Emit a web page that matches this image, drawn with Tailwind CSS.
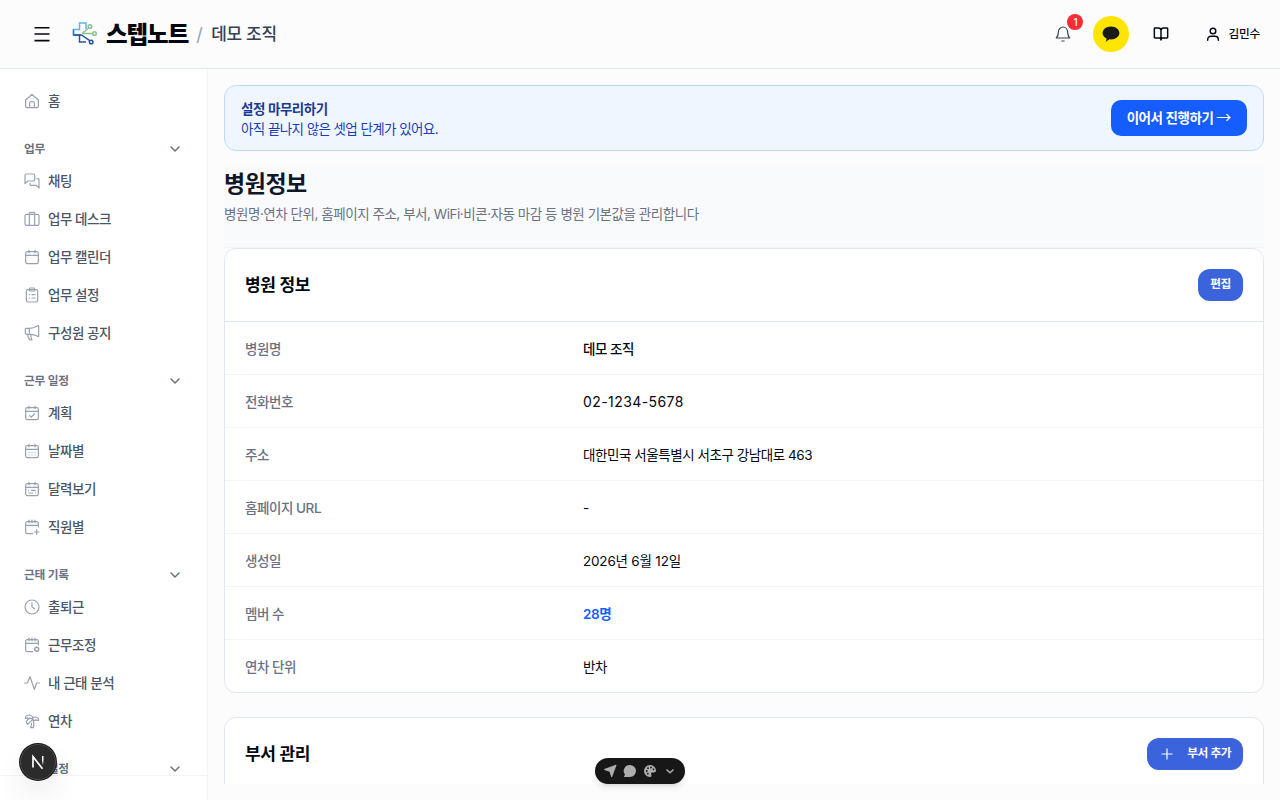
<!DOCTYPE html>
<html lang="ko">

<head>
    <meta charset="UTF-8">
    <meta name="viewport" content="width=device-width, initial-scale=1.0">
    <script src="https://cdn.jsdelivr.net/npm/@tailwindcss/browser@4"></script>
    <title>스텝노트 - 병원정보</title>
</head>

<body class="h-screen flex flex-col overflow-hidden bg-[#fcfcfc] font-['Inter','Noto_Sans_CJK_KR',sans-serif] tracking-[-0.033em] text-[13.5px] text-[#030712]">
    <!-- Header -->
    <header class="h-[69px] shrink-0 flex items-center border-b border-slate-200 pl-8 pr-5">
        <button class="size-5 flex items-center justify-center">
            <svg class="size-5" viewBox="0 0 20 20" fill="none" stroke="currentColor" stroke-width="1.6"><path d="M2.5 3.7h15M2.5 10h15M2.5 16.6h15"/></svg>
        </button>
        <a href="#" class="flex items-center ml-5">
            <svg class="size-[26px]" viewBox="0 0 26 26" fill="none" stroke-width="1.5">
                <path d="M1.500 14V8.500h6V2h6.500v6" stroke="#62b5e5"/>
                <path d="M1.500 8.500V14h7" stroke="#3c7fc0"/>
                <path d="M7.500 14v7h6.500M1.500 14h8l8.300 5.700" stroke="#24559a"/>
                <path d="M10 12.500h10.300M10 12.500l6.700-5.500" stroke="#8cc391"/>
                <circle cx="18" cy="5.500" r="1.800" stroke="#8cc391"/>
                <circle cx="22.500" cy="12.500" r="1.800" stroke="#8cc391"/>
                <circle cx="19.200" cy="21" r="1.800" stroke="#24559a"/>
            </svg>
            <span class="ml-2 pt-0.5 text-[23.5px] tracking-[-0.045em] font-extrabold">스텝노트</span>
        </a>
        <span class="ml-2 pt-0.5 text-lg text-gray-400">/</span>
        <span class="ml-[9px] pt-0.5 text-[17px] tracking-[-0.02em] font-medium text-gray-700">데모 조직</span>
        <div class="ml-auto flex items-center">
            <button class="relative size-9 flex items-center justify-center">
                <svg class="size-4 text-gray-700" viewBox="0 0 24 24" fill="none" stroke="currentColor" stroke-width="1.8" stroke-linecap="round" stroke-linejoin="round"><path d="M10.300 22.500h3.400M2 18c2.500-2.500 3-4.500 3-8.500C5 5 8 1.500 12 1.500s7 3.500 7 8c0 4 .5 6 3 8.500z"/></svg>
                <span class="absolute -top-0.5 right-[-2px] size-4 rounded-full bg-[#fb2c36] text-white text-[10px] font-medium flex items-center justify-center">1</span>
            </button>
            <button class="ml-3 size-9 rounded-full bg-[#fee500] flex items-center justify-center">
                <svg class="size-[18px]" viewBox="0 0 18 18" fill="#191919"><path d="M9 1.500C4.400 1.500.6 4.300.6 8c0 2.300 1.600 4.400 4 5.500l-.8 3.200 3.600-2.400c.5.1 1 .1 1.600.1 4.600 0 8.400-2.800 8.400-6.400S13.600 1.500 9 1.500z"/></svg>
            </button>
            <button class="ml-6 size-4">
                <svg class="size-4" viewBox="0 0 24 24" fill="none" stroke="currentColor" stroke-width="2.200" stroke-linecap="round" stroke-linejoin="round"><path d="M12 7v14M3 18a1 1 0 0 1-1-1V4a1 1 0 0 1 1-1h5a4 4 0 0 1 4 4 4 4 0 0 1 4-4h5a1 1 0 0 1 1 1v13a1 1 0 0 1-1 1h-6a3 3 0 0 0-3 3 3 3 0 0 0-3-3z"/></svg>
            </button>
            <button class="ml-9 flex items-center text-[11.7px] tracking-[-0.02em] font-medium">
                <svg class="size-4" viewBox="0 0 24 24" fill="none" stroke="currentColor" stroke-width="2.200" stroke-linecap="round" stroke-linejoin="round"><circle cx="12" cy="7.500" r="4.200"/><path d="M4 21.500v-1a5 5 0 0 1 5-5h6a5 5 0 0 1 5 5v1"/></svg>
                <span class="ml-[7px] pt-px">김민수</span>
            </button>
        </div>
    </header>

    <div class="flex-1 min-h-0 flex">
        <!-- Sidebar -->
        <aside class="w-52 shrink-0 flex flex-col border-r border-gray-100 bg-white">
            <nav id="menu" class="flex-1 min-h-0 overflow-hidden pt-3.5"></nav>
            <div class="h-[25px] shrink-0 border-t border-gray-100"></div>
        </aside>

        <!-- Main Content -->
        <main class="flex-1 min-w-0 p-4">
            <div class="h-full overflow-hidden">
                <section class="h-[66px] flex items-center justify-between rounded-xl border border-blue-200 bg-[#eff6ff] px-4">
                    <div class="pt-0.5 leading-5">
                        <p class="font-semibold text-blue-900">설정 마무리하기</p>
                        <p class="tracking-[-0.043em] text-blue-800">아직 끝나지 않은 셋업 단계가 있어요.</p>
                    </div>
                    <button class="h-9 w-[136px] pt-px rounded-[10px] bg-[#155dfc] font-semibold text-white whitespace-nowrap">이어서 진행하기 <span class="font-['Noto_Sans_CJK_KR'] font-normal tracking-normal text-[15px] leading-4">→</span></button>
                </section>

                <div class="mt-4 pt-px h-[81px] border-b border-gray-100 bg-[#f9fafc]">
                    <h1 class="text-[23px] tracking-[-0.02em] leading-8 font-bold text-gray-900">병원정보</h1>
                    <p class="mt-1 leading-5 tracking-[-0.034em] text-gray-500">병원명·연차 단위, 홈페이지 주소, 부서, WiFi·비콘·자동 마감 등 병원 기본값을 관리합니다</p>
                </div>

                <section class="rounded-xl border border-slate-200 bg-white">
                    <div class="h-[73px] flex items-center justify-between px-5 border-b border-slate-200">
                        <h2 class="pt-0.5 text-[17px] tracking-[-0.02em] font-semibold">병원 정보</h2>
                        <button class="h-8 w-[45px] rounded-xl bg-[#3b63db] text-[11.7px] font-semibold text-white">편집</button>
                    </div>
                    <dl id="info" class="divide-y divide-gray-100"></dl>
                </section>

                <section class="mt-6 rounded-xl border border-slate-200 bg-white h-[200px]">
                    <div class="h-[73px] flex items-center justify-between px-5 border-b border-slate-200">
                        <h2 class="pt-0.5 text-[17px] tracking-[-0.02em] font-semibold">부서 관리</h2>
                        <button class="h-8 w-24 px-3 rounded-xl bg-[#3b63db] text-[11.7px] font-semibold text-white flex items-center justify-between">
                            <svg class="size-4" viewBox="0 0 16 16" fill="none" stroke="currentColor" stroke-width="1.200"><path d="M8 2.500v11M2.500 8h11"/></svg>
                            부서 추가
                        </button>
                    </div>
                </section>
            </div>
        </main>
    </div>

    <!-- Floating toolbar -->
    <div class="fixed left-[595px] top-[758px] w-[90px] h-[26px] rounded-full bg-[#171717] text-[#adadad] flex items-center pl-2 gap-1.5 shadow-md">
        <svg class="size-3.5" viewBox="0 0 14 14" fill="currentColor"><path d="M12.800.8c.4-.1.700.2.600.6L9.200 12.800c-.2.500-.9.500-1.100 0L6.600 7.700 1.400 6c-.5-.2-.5-.9 0-1.100z"/></svg>
        <svg class="size-3.5" viewBox="0 0 14 14" fill="currentColor"><path d="M7 1a6 6 0 1 1 0 12H1.500c-.5 0-.7-.5-.4-.8l.9-1.500A6 6 0 0 1 7 1z"/></svg>
        <svg class="size-3.5" viewBox="0 0 14 14"><path fill="currentColor" d="M7 1a6 6 0 0 0 0 12c1 0 1.500-.7 1.500-1.500S8 10.400 8 9.700 8.700 8.500 9.500 8.500H11c1.200 0 2-.8 2-2C13 3.500 10.300 1 7 1z"/><g fill="#171717"><circle cx="3.800" cy="7" r=".9"/><circle cx="5" cy="4.200" r=".9"/><circle cx="8" cy="3.500" r=".9"/><circle cx="10.500" cy="5.300" r=".9"/><circle cx="4.800" cy="9.700" r=".9"/></g></svg>
        <svg class="size-3.5" viewBox="0 0 14 14" fill="none" stroke="currentColor" stroke-width="1.500"><path d="M3.500 5.500 7 8.800l3.500-3.300"/></svg>
    </div>

    <!-- Dev tools badge -->
    <div class="fixed left-5 top-[744px] size-9 rounded-full bg-[#2b2b2b] ring-1 ring-[#171717] border border-[#4a4a4a] flex items-center justify-center shadow-[0_16px_32px_-8px_rgba(0,0,0,0.24)]">
        <svg class="size-5" viewBox="0 0 20 20" fill="none" stroke-width="1.700">
            <defs><linearGradient id="fade" x1="0" y1="0" x2="0" y2="1"><stop offset=".4" stop-color="#fff"/><stop offset="1" stop-color="#fff" stop-opacity="0"/></linearGradient></defs>
            <path d="M5 15.500V4.800l9.500 12" stroke="#fff"/>
            <path d="M14 4h1.500v9.500H14z" fill="url(#fade)"/>
        </svg>
    </div>

    <script>
        const calendar = '<rect x="2.500" y="4" width="19" height="18" rx="2.500"/><path d="M2.500 9.500h19M7.500 1.500v4M16.500 1.500v4"/>';
        const openCalendar = '<path d="M21.500 12V6.500A2.500 2.500 0 0 0 19 4H5a2.500 2.500 0 0 0-2.500 2.500v13A2.500 2.500 0 0 0 5 22h8M2.500 9.500h19M7.500 1.500v4M12 1.500v4M16.500 1.500v4"/>';
        const icons = {
            home: '<path d="M2.500 10.500 12 2l9.500 8.500V20a2 2 0 0 1-2 2h-15a2 2 0 0 1-2-2zM8.500 22v-7a2 2 0 0 1 2-2h3a2 2 0 0 1 2 2v7"/>',
            chat: '<path d="M1.500 16V3.500a2 2 0 0 1 2-2H14a2 2 0 0 1 2 2V10a2 2 0 0 1-2 2H6z"/><path d="M19.500 8.500h1a2 2 0 0 1 2 2v12l-4-4H11a2 2 0 0 1-2-2v-1"/>',
            desk: '<rect x="1.500" y="5" width="21" height="16.500" rx="2.500"/><path d="M8 21.500V4a2 2 0 0 1 2-2h4a2 2 0 0 1 2 2v17.500"/>',
            calendar: calendar,
            clipboard: '<rect x="3.500" y="4" width="17" height="18.500" rx="2.500"/><rect x="8" y="1.500" width="8" height="4.500" rx="1"/><path d="M8 11.500h.5M12 11.500h4.500M8 16.500h.5M12 16.500h4.500"/>',
            megaphone: '<path d="M2 6.500c0-1 1-1.500 2-1.500h4c5 0 8-1 12-3.500a1 1 0 0 1 2 .5v14a1 1 0 0 1-2 .500c-4-2.500-7-2.500-12-2.500H4c-1 0-2-1-2-2zM8 5v9M5.500 14c0 4 1.500 6.500 3.500 8.500h3c-1.500-2.500-2-4.500-2-8.500"/>',
            check: calendar + '<path d="m8.500 16 2.500 2 4.500-4.500"/>',
            dots: calendar + '<path d="M7.500 14h.1M12 14h.1M16.500 14h.1M7.500 18h.1M12 18h.1M16.500 18h.1"/>',
            month: calendar + '<path d="M7 14h.1M11 14h6M7 18h6M17 18h.1"/>',
            plus: openCalendar + '<path d="M19 16v7M15.500 19.500h7"/>',
            clock: '<circle cx="12" cy="12" r="10.500"/><path d="M12 5.500V12l4 2.500"/>',
            gear: openCalendar + '<circle cx="19" cy="18.500" r="3" stroke-width="2.200"/>',
            pulse: '<path d="M1 12h4L9 2.500l6.500 19L19 12h4"/>',
            palm: '<path d="M13 8c0-2.760-2.460-5-5.500-5S2 5.240 2 8h2l1-1 1 1h4"/><path d="M13 7.140A5.820 5.820 0 0 1 16.500 6c3.040 0 5.500 2.240 5.500 5h-3l-1-1-1 1h-3"/><path d="M5.890 9.710c-2.150 2.150-2.300 5.470-.350 7.430l4.240-4.250.7-.7.710-.710 2.120-2.120c-1.950-1.960-5.270-1.800-7.420.350"/><path d="M11 15.500c.5 2.500-.170 4.500-1 6.500h4c2-5.500-.5-12-1-14"/>'
        };
        const menu = [
            [null, [['home', '홈']]],
            ['업무', [['chat', '채팅'], ['desk', '업무 데스크'], ['calendar', '업무 캘린더'], ['clipboard', '업무 설정'], ['megaphone', '구성원 공지']]],
            ['근무 일정', [['check', '계획'], ['dots', '날짜별'], ['month', '달력보기'], ['plus', '직원별']]],
            ['근태 기록', [['clock', '출퇴근'], ['gear', '근무조정'], ['pulse', '내 근태 분석'], ['palm', '연차']]],
            ['조직 설정', []]
        ];
        document.querySelector('#menu').innerHTML = menu.map(([title, items]) => `
            ${title ? `<div class="mt-3.5 h-[30px] pt-0.5 pl-6 pr-6 flex items-center justify-between text-[11.7px] tracking-[-0.02em] font-semibold text-gray-500">
                <span class="pt-0.5">${title}</span>
                <svg class="size-4" viewBox="0 0 16 16" fill="none" stroke="currentColor" stroke-width="1.500" stroke-linecap="round" stroke-linejoin="round"><path d="m4 6 4 4 4-4"/></svg>
            </div>` : ''}
            <div class="flex flex-col gap-0.5">
                ${items.map(([icon, label]) => `<a href="#" class="h-9 pl-6 flex items-center gap-2 font-medium text-gray-600">
                    <svg class="size-4 text-gray-400" viewBox="0 0 24 24" fill="none" stroke="currentColor" stroke-width="1.800" stroke-linecap="round" stroke-linejoin="round">${icons[icon]}</svg>
                    <span class="pt-px">${label}</span>
                </a>`).join('')}
            </div>`).join('');

        const info = [
            ['병원명', '데모 조직', 'font-medium'],
            ['전화번호', '02-1234-5678', 'text-sm tracking-[0.03em]'],
            ['주소', '대한민국 서울특별시 서초구 강남대로 463', ''],
            ['홈페이지 URL', '-', ''],
            ['생성일', '2026년 6월 12일', 'tracking-[-0.015em]'],
            ['멤버 수', '28명', 'text-blue-600 font-semibold'],
            ['연차 단위', '반차', '']
        ];
        document.querySelector('#info').innerHTML = info.map(([label, value, style]) => `
            <div class="h-[53px] last:h-[52px] pt-0.5 px-5 grid grid-cols-[338px_1fr] items-center">
                <dt class="font-medium text-gray-500">${label}</dt>
                <dd class="${style}">${value}</dd>
            </div>`).join('');
    </script>
</body>

</html>
